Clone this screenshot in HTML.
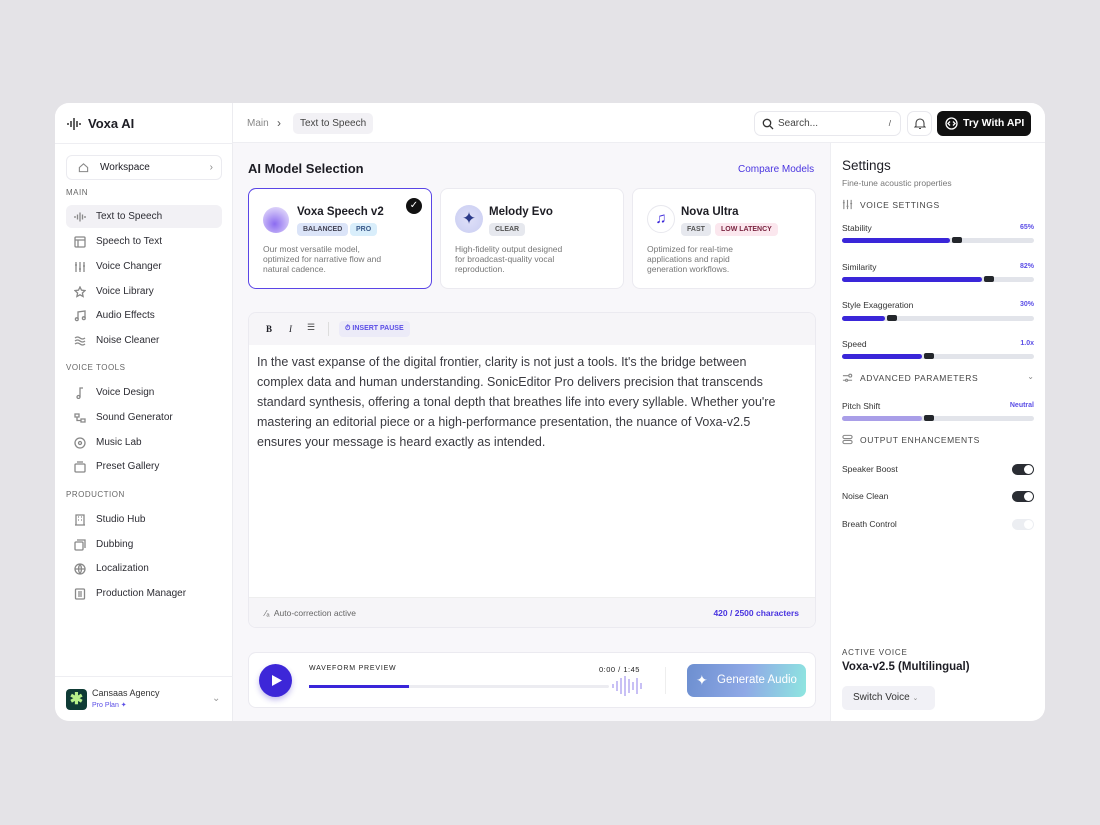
<!DOCTYPE html>
<html><head><meta charset="utf-8"><style>
*{box-sizing:border-box;margin:0;padding:0}
body{width:1100px;height:825px;background:#e4e3e7;font-family:"Liberation Sans",sans-serif;color:#1d1d24;position:relative;overflow:hidden}
.a{position:absolute}
.card{left:55px;top:103px;width:990px;height:618px;background:#f8f7fa;border-radius:14px;overflow:hidden}
.side{left:0;top:0;width:178px;height:618px;background:#fff;border-right:1px solid #ececf0}
.nav{position:absolute;left:11px;width:156px;height:23px;font-size:10px;color:#2c2c33;display:flex;align-items:center;padding-left:8px;border-radius:6px}
.nav svg{width:12px;height:12px;margin-right:10px;stroke:#888;fill:none;stroke-width:1.3}
.sec{position:absolute;left:11px;font-size:8px;letter-spacing:.5px;color:#666}
.mc{position:absolute;top:85px;width:184px;height:101px;background:#fff;border:1px solid #ebeaf0;border-radius:8px}
.mc h4{position:absolute;left:48px;top:17px;font-size:11.5px;font-weight:600}
.mc p{position:absolute;left:14px;top:55px;font-size:8.5px;line-height:10px;color:#777;width:125px}
.tag{position:absolute;top:34px;height:13px;font-size:7px;font-weight:700;padding:0 6px;line-height:13px;border-radius:4px;color:#555;background:#e6e8ee}
.lab{position:absolute;left:11px;font-size:8.5px;color:#333}
.val{position:absolute;right:11px;font-size:7px;font-weight:700;color:#5b4ee6}
.bar{position:absolute;left:11px;width:192px;height:5px;background:#e2e4ea;border-radius:3px}
.fill{position:absolute;left:0;top:0;height:5px;background:#3a26d9;border-radius:3px}
.kn{position:absolute;top:-1px;width:10px;height:6px;background:#23262b;border-radius:2px}
.hd{position:absolute;left:11px;font-size:8.5px;letter-spacing:.6px;color:#444;display:flex;align-items:center}
.hd svg{width:11px;height:11px;margin-right:7px;stroke:#888;fill:none;stroke-width:1.2}
.tg{position:absolute;right:11px;width:22px;height:11px;border-radius:6px;background:#2a2d33}
.tg::after{content:"";position:absolute;right:1px;top:1px;width:9px;height:9px;border-radius:50%;background:#fff}
</style></head><body>
<div class="a card">
 <div class="a side">
  <div class="a" style="left:12px;top:13px;display:flex;align-items:center;gap:7px;font-size:13px;font-weight:600">
   <svg width="14" height="14" viewBox="0 0 14 14" stroke="#222" stroke-width="1.4"><path d="M1 6v2M4 4v6M7 1v12M10 4v6M13 6v2"/></svg>Voxa AI</div>
  <div class="a" style="left:0;top:40px;width:178px;border-top:1px solid #eeeef2"></div>
  <div class="a" style="left:11px;top:52px;width:156px;height:25px;border:1px solid #ebebf0;border-radius:6px;font-size:10px;display:flex;align-items:center;padding-left:11px">
   <svg width="11" height="11" viewBox="0 0 12 12" fill="none" stroke="#888" stroke-width="1.2"><path d="M1.5 6L6 2l4.5 4v4.5h-9z"/></svg><span style="margin-left:11px">Workspace</span><span style="position:absolute;right:8px;color:#888">›</span></div>
  <div class="sec" style="top:85px">MAIN</div>
  <div class="nav" style="top:102px;background:#f2f1f5"><svg viewBox="0 0 12 12"><path d="M1 5v2M3.5 3.5v5M6 1.5v9M8.5 3.5v5M11 5v2"/></svg>Text to Speech</div>
  <div class="nav" style="top:127px"><svg viewBox="0 0 12 12"><rect x="1" y="1" width="10" height="10" rx="1"/><path d="M1 4h10M4 4v7"/></svg>Speech to Text</div>
  <div class="nav" style="top:152px"><svg viewBox="0 0 12 12"><path d="M2 1v10M6 1v10M10 1v10M1 4h2M5 8h2M9 5h2"/></svg>Voice Changer</div>
  <div class="nav" style="top:177px"><svg viewBox="0 0 12 12"><path d="M6 1l1.5 3.2 3.5.4-2.6 2.4.7 3.5L6 8.8 2.9 10.5l.7-3.5L1 4.6l3.5-.4z"/></svg>Voice Library</div>
  <div class="nav" style="top:201px"><svg viewBox="0 0 12 12"><path d="M4 9V2l7-1v7"/><circle cx="2.8" cy="9.2" r="1.4"/><circle cx="9.8" cy="8.2" r="1.4"/></svg>Audio Effects</div>
  <div class="nav" style="top:226px"><svg viewBox="0 0 12 12"><path d="M1 3q2.5-2 5 0t5 0M1 6q2.5-2 5 0t5 0M1 9q2.5-2 5 0t5 0"/></svg>Noise Cleaner</div>
  <div class="sec" style="top:260px">VOICE TOOLS</div>
  <div class="nav" style="top:278px"><svg viewBox="0 0 12 12"><path d="M6 10V1h3"/><circle cx="4.5" cy="10" r="1.5"/></svg>Voice Design</div>
  <div class="nav" style="top:303px"><svg viewBox="0 0 12 12"><path d="M1 2h4v3H1zM7 7h4v3H7zM3 5v3.5h4"/></svg>Sound Generator</div>
  <div class="nav" style="top:328px"><svg viewBox="0 0 12 12"><circle cx="6" cy="6" r="5"/><circle cx="6" cy="6" r="1.5"/></svg>Music Lab</div>
  <div class="nav" style="top:352px"><svg viewBox="0 0 12 12"><rect x="1" y="3" width="10" height="8" rx="1"/><path d="M3 1h6"/></svg>Preset Gallery</div>
  <div class="sec" style="top:387px">PRODUCTION</div>
  <div class="nav" style="top:405px"><svg viewBox="0 0 12 12"><path d="M2 11V1h8v10M1 11h10M4 3h1M7 3h1M4 6h1M7 6h1"/></svg>Studio Hub</div>
  <div class="nav" style="top:430px"><svg viewBox="0 0 12 12"><rect x="1" y="3" width="8" height="8" rx="1"/><path d="M3 1h8v8"/></svg>Dubbing</div>
  <div class="nav" style="top:454px"><svg viewBox="0 0 12 12"><circle cx="6" cy="6" r="5"/><path d="M1 6h10M6 1q3 5 0 10M6 1q-3 5 0 10"/></svg>Localization</div>
  <div class="nav" style="top:479px"><svg viewBox="0 0 12 12"><rect x="1.5" y="1" width="9" height="10" rx="1"/><path d="M4 4h4M4 6h4M4 8h4"/></svg>Production Manager</div>
  <div class="a" style="left:0;top:573px;width:178px;border-top:1px solid #eeeef2"></div>
  <div class="a" style="left:11px;top:586px;width:21px;height:21px;background:#0f3b35;border-radius:4px;color:#b8f08a;font-size:16px;font-weight:900;text-align:center;line-height:21px">✱</div>
  <div class="a" style="left:37px;top:585px;font-size:9px;color:#333">Cansaas Agency</div>
  <div class="a" style="left:37px;top:598px;font-size:7px;color:#5b4ee6">Pro Plan ✦</div>
  <div class="a" style="left:157px;top:590px;font-size:10px;color:#999">⌄</div>
 </div>
 <!-- header -->
 <div class="a" style="left:178px;top:0;width:812px;height:40px;background:#fff;border-bottom:1px solid #eeeef2"></div>
 <div class="a" style="left:192px;top:15px;font-size:10px;color:#888">Main</div>
 <div class="a" style="left:222px;top:13px;font-size:12px;color:#555">›</div>
 <div class="a" style="left:238px;top:10px;height:21px;padding:0 7px;background:#f2f1f5;border-radius:5px;font-size:10px;line-height:21px;color:#444">Text to Speech</div>
 <div class="a" style="left:699px;top:8px;width:147px;height:25px;border:1px solid #e8e8ed;border-radius:7px;font-size:10px;color:#444;line-height:23px;padding-left:23px">Search...<span style="position:absolute;right:9px;font-size:8px">/</span>
  <svg class="a" style="left:7px;top:6px" width="12" height="12" viewBox="0 0 12 12" fill="none" stroke="#333" stroke-width="1.3"><circle cx="5" cy="5" r="3.7"/><path d="M8 8l3 3"/></svg></div>
 <div class="a" style="left:852px;top:8px;width:25px;height:25px;border:1px solid #e8e8ed;border-radius:7px">
  <svg class="a" style="left:6px;top:5px" width="12" height="13" viewBox="0 0 12 13" fill="none" stroke="#444" stroke-width="1.1"><path d="M2 9V6a4 4 0 018 0v3l1 1H1zM5 11.5h2"/></svg></div>
 <div class="a" style="left:882px;top:8px;width:94px;height:25px;background:#111;border-radius:6px;color:#fff;font-size:10.5px;font-weight:700;line-height:25px;padding-left:26px">Try With API
  <svg class="a" style="left:8px;top:6px" width="13" height="13" viewBox="0 0 13 13" fill="none" stroke="#fff" stroke-width="1.3"><circle cx="6.5" cy="6.5" r="5.5"/><path d="M5 4.5L3 6.5l2 2M8 4.5l2 2-2 2"/></svg></div>
 <!-- main -->
 <div class="a" style="left:193px;top:58px;font-size:13px;font-weight:600">AI Model Selection</div>
 <div class="a" style="left:683px;top:61px;font-size:10px;color:#4a35e0">Compare Models</div>
 <div class="mc" style="left:193px;border:1.5px solid #5a45e6">
  <div class="a" style="left:14px;top:18px;width:26px;height:26px;border-radius:50%;background:radial-gradient(circle at 45% 65%,#8c6cf0,#c7b7f7 55%,#f2eefc)"></div>
  <h4>Voxa Speech v2</h4>
  <div class="tag" style="left:48px;background:#dbe4f8;color:#445">BALANCED</div>
  <div class="tag" style="left:101px;background:#d9eefb;color:#3a5a8a">PRO</div>
  <div class="a" style="right:9px;top:9px;width:16px;height:16px;border-radius:50%;background:#111;color:#fff;font-size:10px;text-align:center;line-height:16px">✓</div>
  <p>Our most versatile model, optimized for narrative flow and natural cadence.</p></div>
 <div class="mc" style="left:385px">
  <div class="a" style="left:14px;top:16px;width:28px;height:28px;border-radius:50%;background:radial-gradient(circle,#dfe0f8,#c9cdf2);color:#2b3a8a;font-size:17px;text-align:center;line-height:28px">✦</div>
  <h4>Melody Evo</h4>
  <div class="tag" style="left:48px">CLEAR</div>
  <p style="width:110px">High-fidelity output designed for broadcast-quality vocal reproduction.</p></div>
 <div class="mc" style="left:577px">
  <div class="a" style="left:14px;top:16px;width:28px;height:28px;border-radius:50%;border:1px solid #e8e8ee;color:#3a26d9;font-size:15px;text-align:center;line-height:26px">♫</div>
  <h4>Nova Ultra</h4>
  <div class="tag" style="left:48px">FAST</div>
  <div class="tag" style="left:82px;background:#fbe7ee;color:#7a2440">LOW LATENCY</div>
  <p style="width:105px">Optimized for real-time applications and rapid generation workflows.</p></div>
 <!-- editor -->
 <div class="a" style="left:193px;top:209px;width:568px;height:316px;background:#fff;border:1px solid #ebeaf0;border-radius:8px;overflow:hidden">
  <div class="a" style="left:0;top:0;width:568px;height:32px;background:#f6f5f8"></div>
  <div class="a" style="left:17px;top:11px;font-size:9px;font-weight:700;font-family:'Liberation Serif',serif">B</div>
  <div class="a" style="left:40px;top:11px;font-size:9px;font-style:italic;font-family:'Liberation Serif',serif">I</div>
  <div class="a" style="left:58px;top:9px;font-size:9px;color:#444">☰</div>
  <div class="a" style="left:79px;top:9px;height:14px;border-left:1px solid #ddd"></div>
  <div class="a" style="left:90px;top:8px;height:16px;padding:0 6px;background:#ecebf8;border-radius:4px;font-size:7px;font-weight:700;color:#5b4ee6;line-height:16px">⏱ INSERT PAUSE</div>
  <div class="a" style="left:8px;top:39px;width:532px;font-size:12.5px;line-height:20px;color:#3a3a40">In the vast expanse of the digital frontier, clarity is not just a tools. It's the bridge between complex data and human understanding. SonicEditor Pro delivers precision that transcends standard synthesis, offering a tonal depth that breathes life into every syllable. Whether you're mastering an editorial piece or a high-performance presentation, the nuance of Voxa-v2.5 ensures your message is heard exactly as intended.</div>
  <div class="a" style="left:0;top:284px;width:568px;height:32px;background:#f6f5f8;border-top:1px solid #eee"></div>
  <div class="a" style="left:16px;top:295px;font-size:8.5px;color:#666">⁄ₐ&nbsp; Auto-correction active</div>
  <div class="a" style="right:16px;top:295px;font-size:8.5px;font-weight:700;color:#4a35e0">420 / 2500 characters</div>
 </div>
 <!-- player -->
 <div class="a" style="left:193px;top:549px;width:568px;height:56px;background:#fff;border:1px solid #ebeaf0;border-radius:8px">
  <div class="a" style="left:10px;top:11px;width:33px;height:33px;border-radius:50%;background:#3d27d8;box-shadow:0 3px 6px rgba(60,40,200,.3)">
   <svg class="a" style="left:12px;top:10px" width="12" height="13" viewBox="0 0 12 13"><path d="M1 1l10 5.5L1 12z" fill="#fff"/></svg></div>
  <div class="a" style="left:60px;top:12px;font-size:7px;letter-spacing:.8px;color:#222">WAVEFORM PREVIEW</div>
  <div class="a" style="left:350px;top:12px;font-size:7.5px;letter-spacing:.5px;color:#222">0:00 / 1:45</div>
  <div class="a" style="left:60px;top:32px;width:300px;height:3px;background:#ececf1;border-radius:2px"><div style="width:100px;height:3px;background:#3a26d9"></div></div>
  <svg class="a" style="left:362px;top:22px" width="34" height="22" viewBox="0 0 34 22" stroke="#c8c0f5" stroke-width="2"><path d="M2 9v4M6 6v10M10 3v16M14 1v20M18 4v14M22 7v8M26 3v16M30 8v6"/></svg>
  <div class="a" style="left:416px;top:14px;height:27px;border-left:1px solid #eee"></div>
  <div class="a" style="left:438px;top:11px;width:119px;height:33px;border-radius:7px;background:linear-gradient(100deg,#6d8fd0,#8fa9e6 50%,#8ee6e0);color:#fff;font-size:11.5px;line-height:33px;padding-left:30px">Generate Audio<span style="position:absolute;left:9px;font-size:14px">✦</span></div>
 </div>
 <!-- right panel -->
 <div class="a" style="left:775px;top:40px;width:215px;height:578px;background:#fff;border-left:1px solid #eeeef2">
  <div class="a" style="left:11px;top:15px;font-size:13.5px">Settings</div>
  <div class="a" style="left:11px;top:35px;font-size:8.5px;color:#777">Fine-tune acoustic properties</div>
  <div class="hd" style="top:56px"><svg viewBox="0 0 12 12"><path d="M2 1v10M6 1v10M10 1v10M1 4h2M5 8h2M9 5h2"/></svg>VOICE SETTINGS</div>
  <div class="lab" style="top:80px">Stability</div><div class="val" style="top:81px">65%</div>
  <div class="bar" style="top:95px"><div class="fill" style="width:108px"></div><div class="kn" style="left:110px"></div></div>
  <div class="lab" style="top:119px">Similarity</div><div class="val" style="top:120px">82%</div>
  <div class="bar" style="top:134px"><div class="fill" style="width:140px"></div><div class="kn" style="left:142px"></div></div>
  <div class="lab" style="top:157px">Style Exaggeration</div><div class="val" style="top:158px">30%</div>
  <div class="bar" style="top:173px"><div class="fill" style="width:43px"></div><div class="kn" style="left:45px"></div></div>
  <div class="lab" style="top:196px">Speed</div><div class="val" style="top:197px">1.0x</div>
  <div class="bar" style="top:211px"><div class="fill" style="width:80px"></div><div class="kn" style="left:82px"></div></div>
  <div class="hd" style="top:229px"><svg viewBox="0 0 12 12"><path d="M1 4h6M1 9h3M6 9h5"/><circle cx="9" cy="4" r="1.6"/><circle cx="5" cy="9" r="1.2"/></svg>ADVANCED PARAMETERS</div>
  <div class="a" style="right:11px;top:229px;font-size:8px;color:#888">⌄</div>
  <div class="lab" style="top:258px">Pitch Shift</div><div class="val" style="top:259px">Neutral</div>
  <div class="bar" style="top:273px"><div class="fill" style="width:80px;background:#a99ee8"></div><div class="kn" style="left:82px"></div></div>
  <div class="hd" style="top:291px"><svg viewBox="0 0 12 12"><rect x="1" y="1.5" width="10" height="3.5" rx="1.7"/><rect x="1" y="7" width="10" height="3.5" rx="1.7"/></svg>OUTPUT ENHANCEMENTS</div>
  <div class="lab" style="top:321px">Speaker Boost</div><div class="tg" style="top:321px"></div>
  <div class="lab" style="top:348px">Noise Clean</div><div class="tg" style="top:348px"></div>
  <div class="lab" style="top:376px">Breath Control</div><div class="tg" style="top:376px;background:#eceef2"></div>
  <div class="a" style="left:11px;top:505px;font-size:8px;letter-spacing:.8px;color:#444">ACTIVE VOICE</div>
  <div class="a" style="left:11px;top:518px;font-size:11.5px;font-weight:600">Voxa-v2.5 (Multilingual)</div>
  <div class="a" style="left:11px;top:543px;width:93px;height:24px;background:#f1f1f6;border-radius:5px;font-size:10px;line-height:24px;padding-left:11px;color:#333">Switch Voice <span style="font-size:7px;color:#888">⌄</span></div>
 </div>
</div>
</body></html>
